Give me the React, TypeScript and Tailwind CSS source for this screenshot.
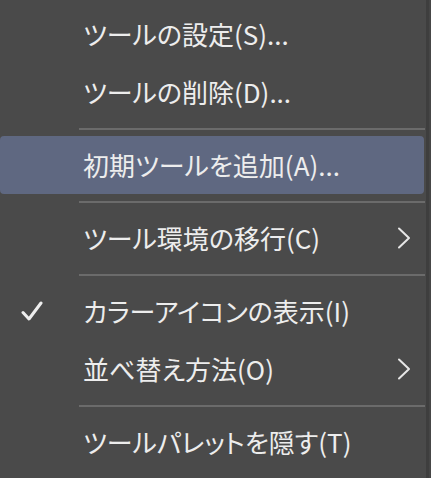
import React from "react";

const Chevron = () => (
  <svg width="16" height="22" viewBox="0 0 16 22" className="shrink-0">
    <path d="M3 1.5 L13 11 L3 20.5" fill="none" stroke="#e6e6e6" strokeWidth="2" strokeLinecap="round" strokeLinejoin="round" />
  </svg>
);

const Check = () => (
  <svg width="22" height="22" viewBox="0 0 22 22">
    <path d="M2 12.5 L8 19 L20 3" fill="none" stroke="#eeeeee" strokeWidth="3" strokeLinecap="round" strokeLinejoin="round" />
  </svg>
);

type ItemProps = { label: string; highlighted?: boolean; checked?: boolean; submenu?: boolean };

const Item = ({ label, highlighted, checked, submenu }: ItemProps) => (
  <div
    className={`flex h-[58px] items-center mr-[2px] rounded-[4px] ${highlighted ? "bg-[#5f6881]" : ""}`}
  >
    <div className="w-[83px] shrink-0 flex items-center justify-start pl-[21px]">
      {checked ? <Check /> : null}
    </div>
    <span className="flex-1 text-[26px] leading-none text-[#ededed] whitespace-nowrap [font-feature-settings:'palt']">
      {label}
    </span>
    <div className="w-[28px] shrink-0 flex items-center justify-start">
      {submenu ? <Chevron /> : null}
    </div>
  </div>
);

const Sep = () => (
  <div className="pt-[7px] pb-[6px] pl-[79px] pr-[1px]">
    <div className="h-[2px] bg-[#6b6b6b]" />
  </div>
);

export default function App() {
  return (
    <div
      className="w-[431px] h-[478px] bg-[#4a4a4a] overflow-hidden flex"
      style={{ fontFamily: '"Noto Sans CJK JP", "Noto Sans", sans-serif' }}
    >
      <div className="flex-1 pt-[5px]">
        <Item label="ツールの設定(S)..." />
        <Item label="ツールの削除(D)..." />
        <Sep />
        <Item label="初期ツールを追加(A)..." highlighted />
        <Sep />
        <Item label="ツール環境の移行(C)" submenu />
        <Sep />
        <Item label="カラーアイコンの表示(I)" checked />
        <Item label="並べ替え方法(O)" submenu />
        <Sep />
        <Item label="ツールパレットを隠す(T)" />
      </div>
      <div className="w-[3px] bg-[#3e3e3e]" />
      <div className="w-[2px] bg-[#464646]" />
    </div>
  );
}
